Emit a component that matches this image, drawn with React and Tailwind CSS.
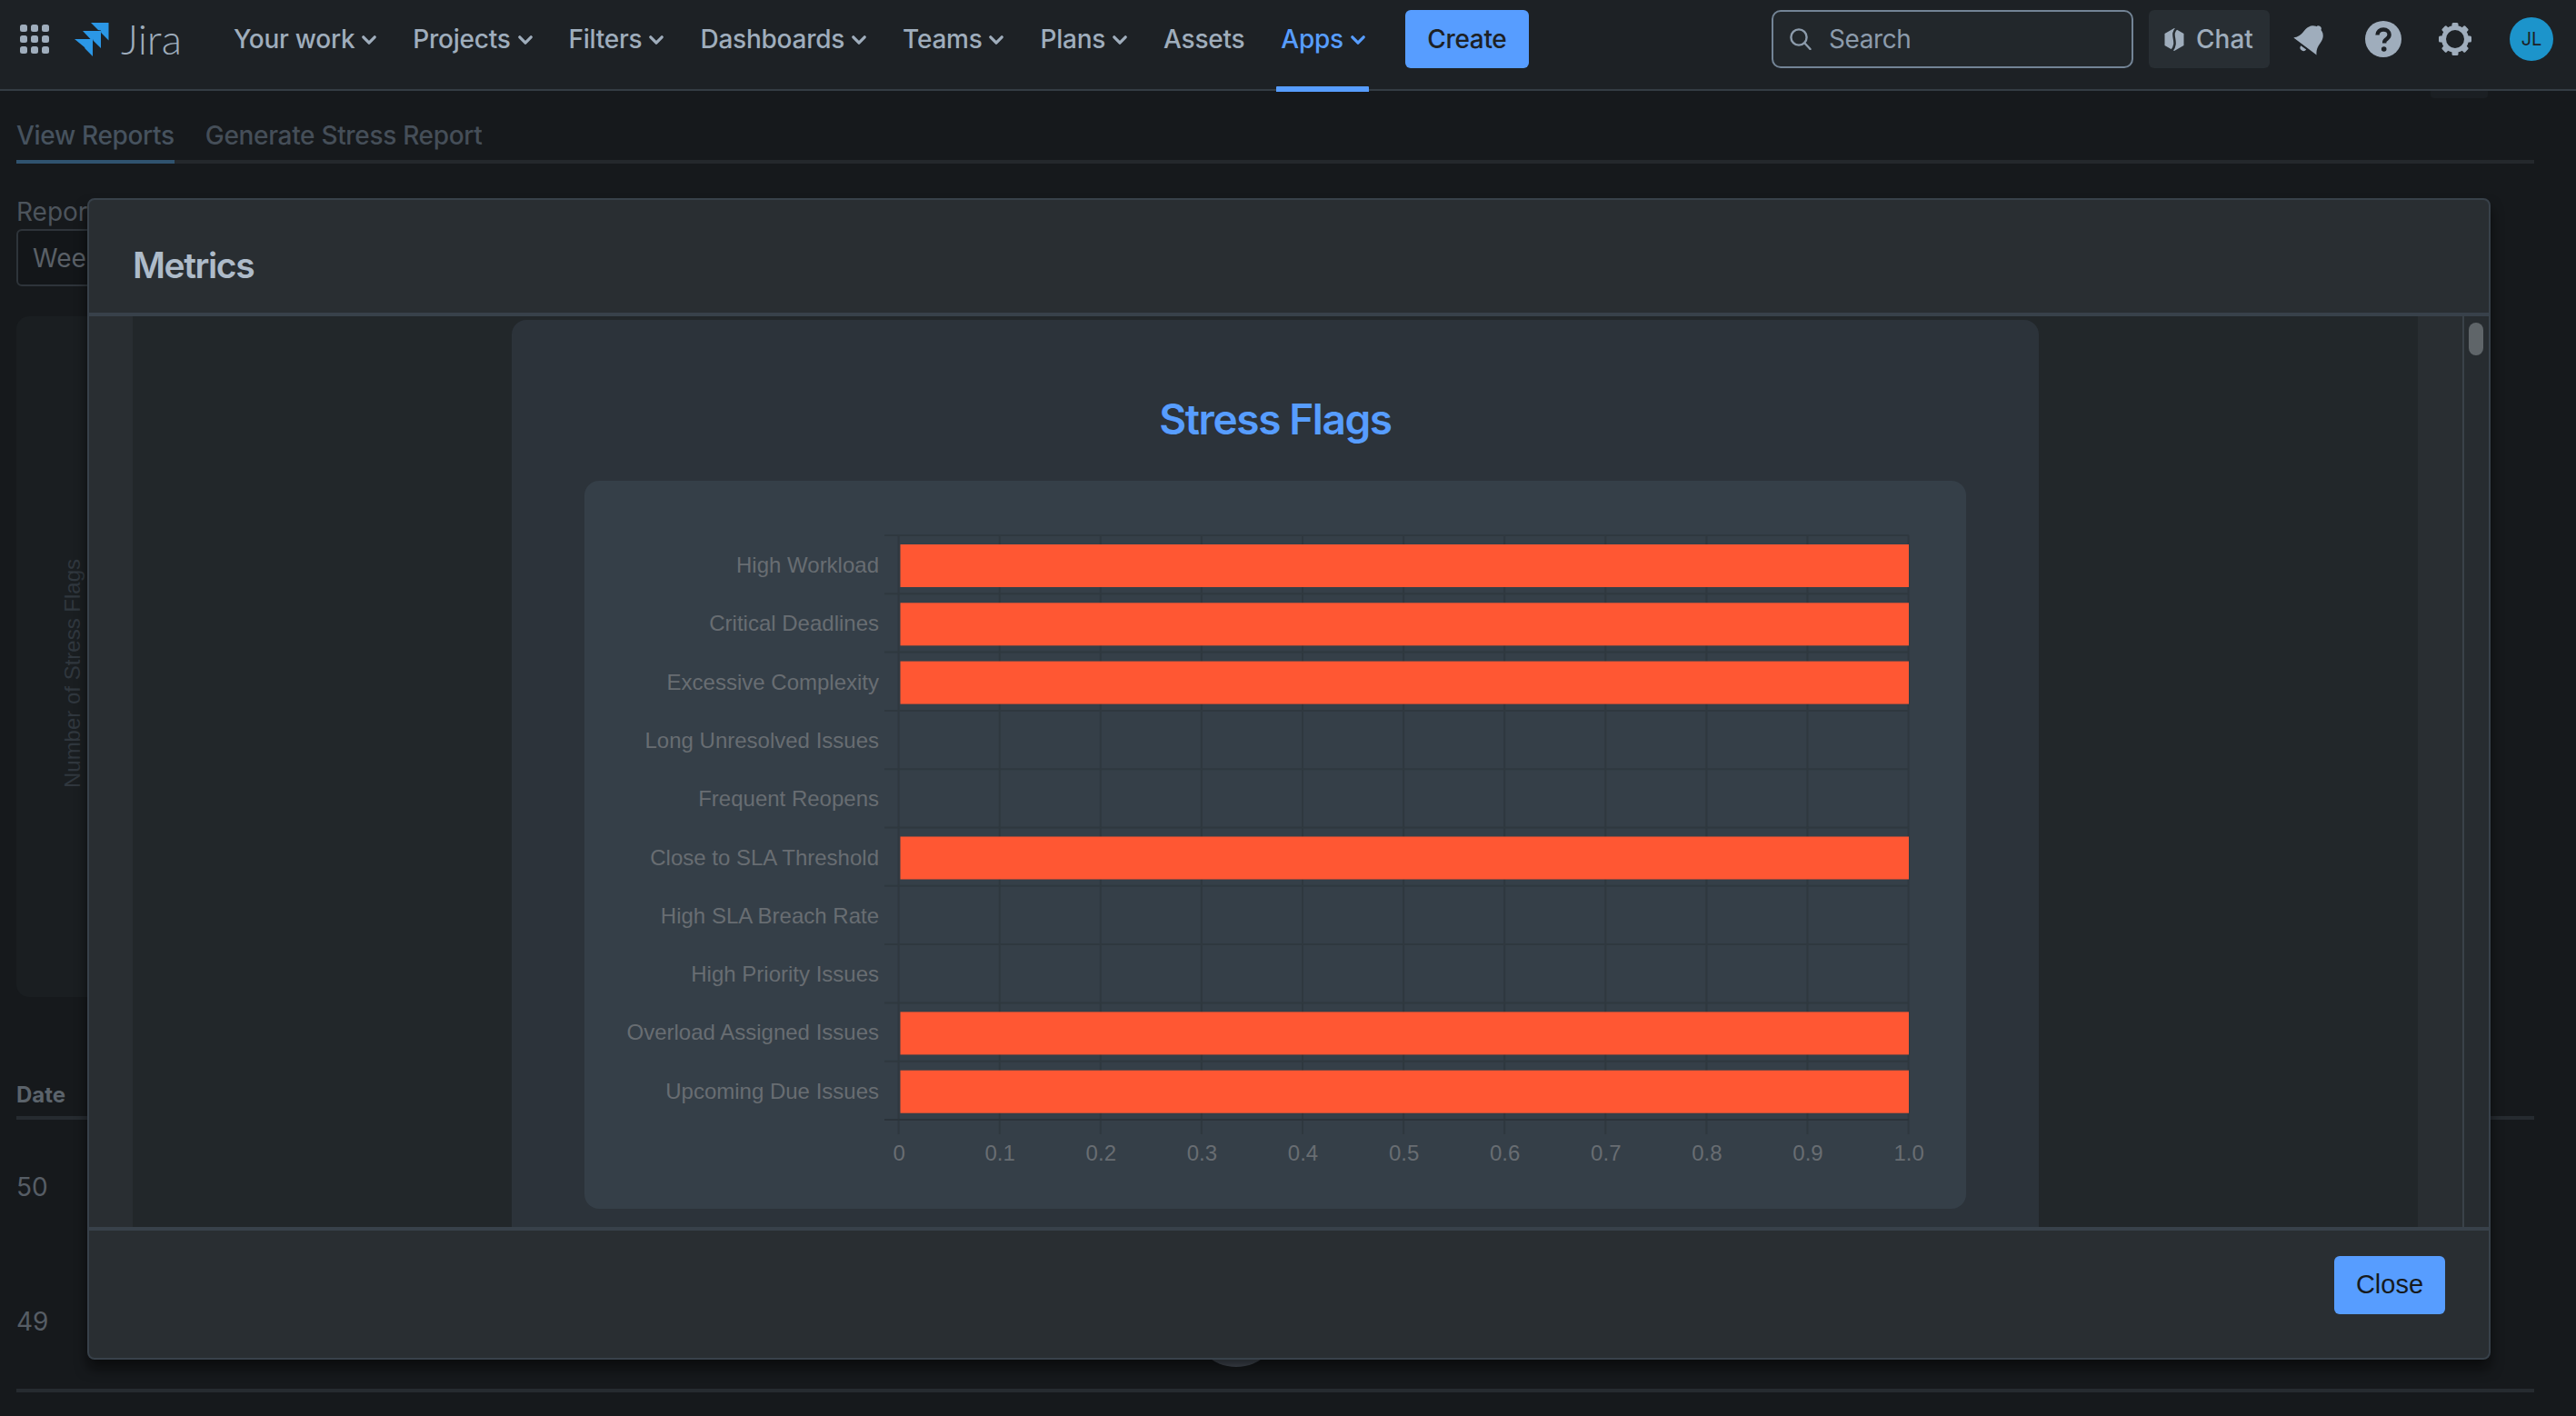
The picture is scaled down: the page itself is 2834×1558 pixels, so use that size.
import React from 'react';

const navItems = [
  { label: 'Your work', chevron: true },
  { label: 'Projects', chevron: true },
  { label: 'Filters', chevron: true },
  { label: 'Dashboards', chevron: true },
  { label: 'Teams', chevron: true },
  { label: 'Plans', chevron: true },
  { label: 'Assets', chevron: false },
];

const flags = [
  { label: 'High Workload', on: true },
  { label: 'Critical Deadlines', on: true },
  { label: 'Excessive Complexity', on: true },
  { label: 'Long Unresolved Issues', on: false },
  { label: 'Frequent Reopens', on: false },
  { label: 'Close to SLA Threshold', on: true },
  { label: 'High SLA Breach Rate', on: false },
  { label: 'High Priority Issues', on: false },
  { label: 'Overload Assigned Issues', on: true },
  { label: 'Upcoming Due Issues', on: true },
];

const ticks = ['0', '0.1', '0.2', '0.3', '0.4', '0.5', '0.6', '0.7', '0.8', '0.9', '1.0'];

const Chevron = ({ color = '#9fadbc' }) => (
  <svg width="16" height="11" viewBox="0 0 16 11" fill="none" className="mt-[2px]">
    <path d="M1.8 1.8 8 8.2l6.2-6.4" stroke={color} strokeWidth="3.2" strokeLinecap="round" strokeLinejoin="round" />
  </svg>
);

const AppGrid = () => (
  <svg width="32" height="32" viewBox="0 0 32 32" fill="#9fadbc">
    {[0, 12, 24].map((y) =>
      [0, 12, 24].map((x) => <rect key={`${x}-${y}`} x={x} y={y} width="8" height="8" rx="2.5" />)
    )}
  </svg>
);

const JiraMark = () => (
  <svg width="38" height="38" viewBox="0 0 38 38" fill="#2b97e6">
    <path d="M18 1h19.5v19.5L29.2 12l-.2-2.6L26 9z" />
    <path d="M9 10h20v19l-8.4-8.2-.6-1.8h-2.5z" />
    <path d="M0 19h20v19l-8.4-8.4L11 28z" />
  </svg>
);

const SearchIcon = () => (
  <svg width="26" height="24" viewBox="0 0 26 24" fill="none" stroke="#8c9bab" strokeWidth="2.4" strokeLinecap="round">
    <circle cx="11" cy="10" r="8.6" />
    <path d="m17.5 16.5 6 6.5" />
  </svg>
);

const ChatIcon = () => (
  <svg width="22" height="25" viewBox="0 0 22 25">
    <path d="M11 0 21.5 6v13L11 25 .5 19V6z" fill="#9fadbc" />
    <path d="M14 0C5 7 17 15 8 25" stroke="#282e33" strokeWidth="2.6" fill="none" />
  </svg>
);

const BellIcon = () => (
  <svg width="38" height="38" viewBox="0 0 36 36" fill="#9fadbc">
    <g transform="rotate(37 18 18)">
      <circle cx="18" cy="4.5" r="3" />
      <path d="M18 3.500c7 0 10.500 5 10.500 11.500 0 6 1.500 9.500 4.500 12.500H3C6 24.500 7.500 21 7.500 15 7.500 8.500 11 3.500 18 3.500z" />
      <path d="M14 29.500h7a3.500 3.500 0 0 1-7 0z" />
    </g>
  </svg>
);

const HelpIcon = () => (
  <svg width="40" height="40" viewBox="0 0 40 40">
    <circle cx="20" cy="20" r="20" fill="#9fadbc" />
    <path d="M13.500 15.500c0-3.700 2.900-6 6.600-6 3.800 0 6.500 2.300 6.500 5.600 0 2.500-1.400 3.800-3.100 5-1.500 1-2.300 1.800-2.300 3.500v1" fill="none" stroke="#1d2125" strokeWidth="4.4" />
    <circle cx="20.700" cy="31" r="2.800" fill="#1d2125" />
  </svg>
);

const GearIcon = () => (
  <svg width="36" height="36" viewBox="0 0 36 36" fill="#9fadbc">
    <circle cx="18" cy="18" r="12.500" fill="none" stroke="#9fadbc" strokeWidth="5" />
    {[0, 45, 90, 135, 180, 225, 270, 315].map((a) => (
      <rect key={a} x="14.500" y="0" width="7" height="6" rx="1.500" transform={`rotate(${a} 18 18)`} />
    ))}
  </svg>
);

const StressChart = () => {
  const gx = (i) => 345.6 + i * 111.1;
  const gy = (i) => 60 + i * 64.3;
  return (
    <svg viewBox="0 0 1520 801" className="w-full h-full [font-family:'Liberation_Sans',sans-serif]">
      {ticks.map((t, i) => (
        <line key={t} x1={gx(i)} x2={gx(i)} y1="60" y2="719" stroke="#2f383f" strokeWidth="2" />
      ))}
      {flags.map((f, i) => (
        <line key={f.label} x1="330" x2="1457" y1={gy(i)} y2={gy(i)} stroke="#2f383f" strokeWidth="2" />
      ))}
      <line x1="330" x2="1457" y1={gy(10)} y2={gy(10)} stroke="#2b333a" strokeWidth="2" />
      {flags.map((f, i) =>
        f.on ? <rect key={f.label} x="347.500" y={70 + i * 64.3} width="1109.500" height="47" fill="#ff5733" /> : null
      )}
      {flags.map((f, i) => (
        <text key={f.label} x="324" y={101 + i * 64.3} textAnchor="end" fontSize="24" fill="#686d72">
          {f.label}
        </text>
      ))}
      {ticks.map((t, i) => (
        <text key={t} x={gx(i) + 0.5} y="748" textAnchor="middle" fontSize="24" fill="#686d72">
          {t}
        </text>
      ))}
    </svg>
  );
};

const MetricsModal = () => (
  <div className="absolute left-[96px] top-[218px] w-[2644px] h-[1278px] flex flex-col rounded-[8px] border-2 border-[#38414a] bg-[#292e32] shadow-[0_10px_14px_#03040490]">
    <div className="h-[128px] shrink-0 flex items-center pl-[48px] pt-[21px] border-b-4 border-[#38414a]">
      <h2 className="text-[39px] font-semibold text-[#aebbc9] tracking-[-1.4px]">Metrics</h2>
    </div>

    <div className="flex-1 min-h-0 flex overflow-hidden">
      <div className="w-[48px] shrink-0 bg-[#292e32]" />
      <div className="flex-1 pt-[4px] bg-[#22272a] flex justify-center">
        <div className="w-[1680px] h-[1100px] rounded-t-[16px] bg-[#2c333a] px-[80px]">
          <h1 className="h-[177px] pt-[74px] text-center text-[46px] leading-[70px] font-semibold text-[#579dff] tracking-[-1.4px]">
            Stress Flags
          </h1>
          <div className="w-[1520px] h-[801px] rounded-[16px] bg-[#353f48]">
            <StressChart />
          </div>
        </div>
      </div>
      <div className="w-[49px] shrink-0 bg-[#292e32] border-r-2 border-[#3a4249] box-content" />
      <div className="w-[27px] shrink-0 bg-[#272c30] pt-[7px] pl-[5px]">
        <div className="w-[16px] h-[36px] rounded-full bg-[#5f6569]" />
      </div>
    </div>

    <div className="h-[144px] shrink-0 flex justify-end items-start pt-[28px] pr-[48px] border-t-4 border-[#38414a]">
      <button className="w-[122px] h-[64px] rounded-[6px] bg-[#579dff] text-[#161a1d] text-[29px] [font-family:'Liberation_Sans',sans-serif]">
        Close
      </button>
    </div>
  </div>
);

export default function App() {
  return (
    <div className="relative w-[2834px] h-screen overflow-hidden bg-[#16191c] [font-family:Inter,sans-serif]">
      <header className="h-[100px] flex items-center pl-[22px] pr-[25px] pb-[12px] bg-[#1d2125] border-b-2 border-[#343c43]">
        <AppGrid />
        <div className="ml-[28px] flex items-center">
          <JiraMark />
          <span className="ml-[13px] text-[46px] leading-none font-light text-[#9fadbc] [font-family:Lato,sans-serif]">Jira</span>
        </div>
        <nav className="ml-[57px] flex items-center gap-[40px] text-[28px] font-medium text-[#9fadbc] tracking-[-0.25px]">
          {navItems.map((item) => (
            <a key={item.label} className="flex items-center gap-[8px]">
              {item.label}
              {item.chevron && <Chevron />}
            </a>
          ))}
          <a className="relative flex items-center gap-[8px] text-[#579dff]">
            Apps
            <Chevron color="#579dff" />
            <span className="absolute -left-[5px] -right-[4px] top-[73px] h-[6px] rounded-t-[1px] bg-[#579dff]" />
          </a>
        </nav>
        <button className="ml-[44px] w-[136px] h-[64px] rounded-[6px] bg-[#579dff] text-[28px] font-medium text-[#1d2125] tracking-[-0.32px]">
          Create
        </button>

        <div className="ml-auto w-[398px] h-[64px] flex items-center gap-[18px] pl-[17px] rounded-[10px] border-2 border-[#738496] bg-[#22272b] text-[28px] text-[#8c9bab] tracking-[-0.4px]">
          <SearchIcon />
          Search
        </div>
        <button className="ml-[17px] w-[133px] h-[64px] flex items-center gap-[13px] pl-[17px] rounded-[6px] bg-[#282e33] text-[28px] font-medium text-[#9fadbc]">
          <ChatIcon />
          Chat
        </button>
        <div className="ml-[26px]"><BellIcon /></div>
        <div className="ml-[41px]"><HelpIcon /></div>
        <div className="ml-[41px]"><GearIcon /></div>
        <div className="ml-[42px] w-[48px] h-[48px] rounded-full bg-[#1c94cb] flex items-center justify-center text-[20px] text-[#1d2125]">
          JL
        </div>
      </header>

      <main className="pl-[18px] pr-[46px]">
        <div className="flex gap-[34px] pt-[31px] border-b-4 border-[#24282c] text-[28px] font-medium tracking-[-0.32px]">
          <div className="leading-[36px] pb-[9px] -mb-[4px] border-b-4 border-[#30536f] text-[#46525e]">View Reports</div>
          <div className="leading-[36px] text-[#454e58]">Generate Stress Report</div>
        </div>

        <div className="mt-[35px] mb-[1px] text-[28px] leading-[36px] text-[#4d545c]">Report Type</div>
        <div className="w-[400px] h-[63px] flex items-center pl-[16px] rounded-[6px] border-2 border-[#2e343a] bg-[#131619] text-[28px] text-[#5a6067]">
          Weekly
        </div>

        <div className="relative mt-[33px] w-[1200px] h-[749px] rounded-[14px] bg-[#1a1e21]">
          <span className="absolute left-[27px] top-[393px] -translate-x-1/2 -translate-y-1/2 -rotate-90 whitespace-nowrap text-[24px] text-[#30373e] [font-family:'Liberation_Sans',sans-serif] ml-[35px]">
            Number of Stress Flags
          </span>
        </div>

        <div className="mt-[93px] pb-[8px] border-b-4 border-[#262b30] text-[24px] leading-[30px] font-bold text-[#5b636b]">Date</div>
        <div className="border-b-4 border-[#262b30] text-[28px] text-[#565d65]">
          <div className="h-[148px] flex items-center">50</div>
          <div className="h-[148px] flex items-center">49</div>
        </div>
      </main>

      <div className="absolute left-[2674px] top-[100px] w-[63px] h-[8px] rounded-b-[4px] bg-[#1b1f23]" />
      <div className="absolute left-[1310px] top-[1404px] w-[100px] h-[100px] rounded-full bg-[#4a525c]" />
      <MetricsModal />
    </div>
  );
}
